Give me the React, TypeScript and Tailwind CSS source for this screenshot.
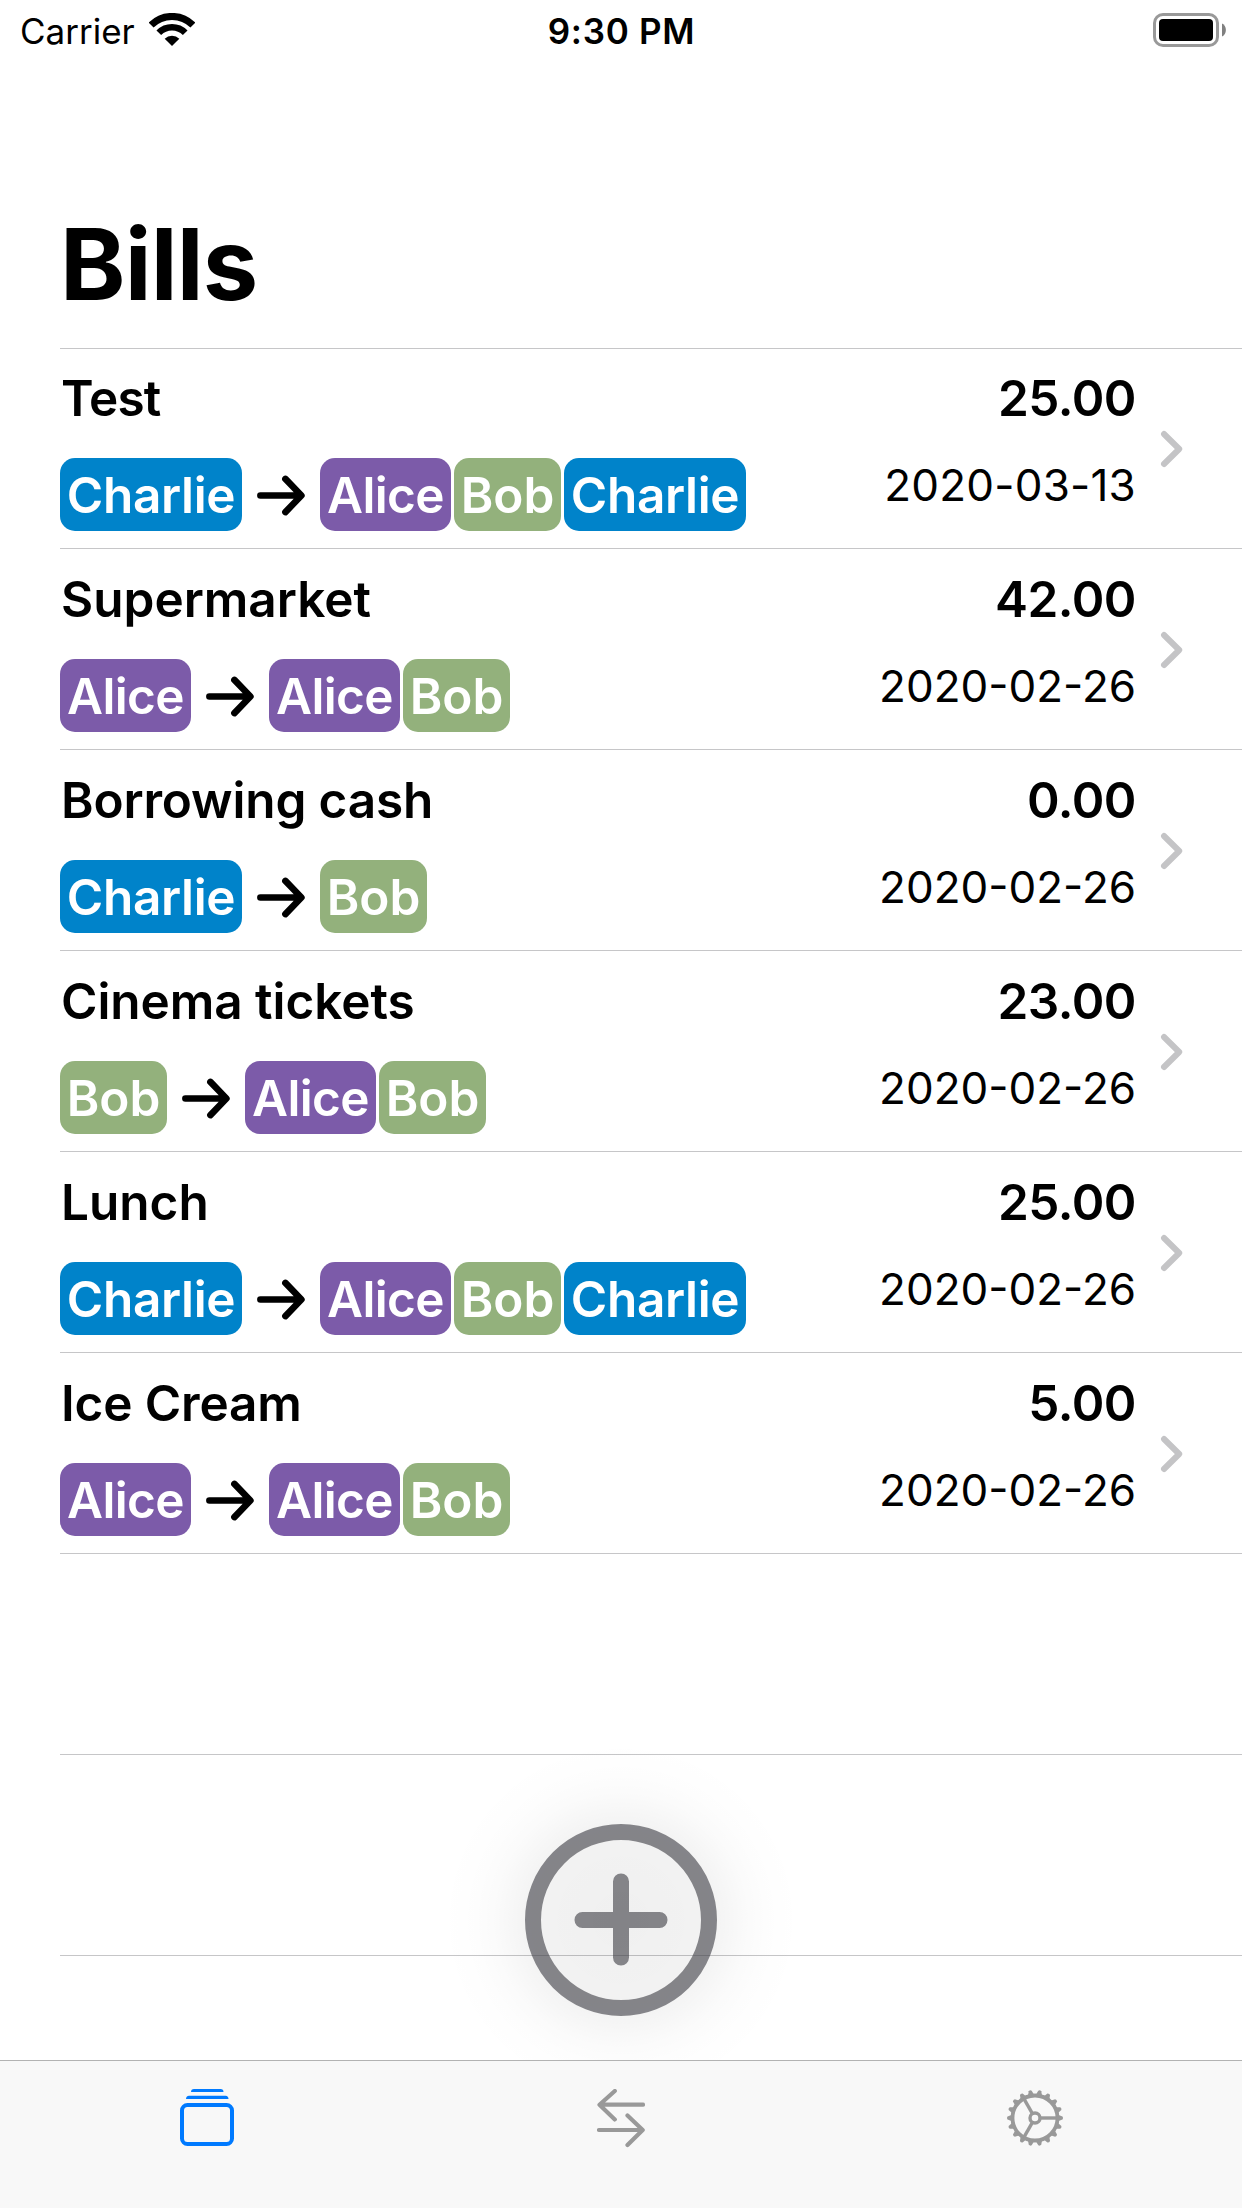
import React from "react";

type Person = "Alice" | "Bob" | "Charlie";

interface Bill {
  title: string;
  titleClass?: string;
  amount: string;
  date: string;
  dateClass?: string;
  from: Person;
  to: Person[];
}

const bills: Bill[] = [
  { title: "Test", titleClass: "tracking-[-0.8px]", amount: "25.00", date: "2020-03-13", dateClass: "tracking-[0.2px]", from: "Charlie", to: ["Alice", "Bob", "Charlie"] },
  { title: "Supermarket", amount: "42.00", date: "2020-02-26", from: "Alice", to: ["Alice", "Bob"] },
  { title: "Borrowing cash", titleClass: "tracking-[-0.15px]", amount: "0.00", date: "2020-02-26", from: "Charlie", to: ["Bob"] },
  { title: "Cinema tickets", titleClass: "tracking-[-0.05px]", amount: "23.00", date: "2020-02-26", from: "Bob", to: ["Alice", "Bob"] },
  { title: "Lunch", amount: "25.00", date: "2020-02-26", from: "Charlie", to: ["Alice", "Bob", "Charlie"] },
  { title: "Ice Cream", titleClass: "tracking-[-0.15px]", amount: "5.00", date: "2020-02-26", from: "Alice", to: ["Alice", "Bob"] },
];

const chipClass: Record<Person, string> = {
  Alice: "w-[131px] bg-[#7c5ba9] tracking-[-0.6px]",
  Bob: "w-[107px] bg-[#93b17c]",
  Charlie: "w-[182px] bg-[#0083ca] tracking-[-0.35px]",
};

function Chip({ name }: { name: Person }) {
  return (
    <span className={`flex h-[73px] justify-center rounded-[15px] leading-[75px] text-white ${chipClass[name]}`}>
      {name}
    </span>
  );
}

function Arrow() {
  return (
    <svg className="mx-[15px] mt-px h-[41px] w-12" viewBox="0 0 48 41" fill="none" stroke="#000" strokeWidth="6.6" strokeLinecap="round" strokeLinejoin="round">
      <path d="M3.4 20.5H43M28.4 3.9 44.4 20.5 28.4 37.1" />
    </svg>
  );
}

function BillRow({ bill }: { bill: Bill }) {
  return (
    <li className="ml-[60px] flex h-[201px] items-end border-b border-[#c6c6c8] pr-[59px] first:h-[200px]">
      <div className="flex grow flex-col gap-[30px] pb-[17px] text-[49.5px] font-semibold">
        <div className={`pl-px leading-[60px] ${bill.titleClass ?? ""}`}>{bill.title}</div>
        <div className="flex items-center">
          <Chip name={bill.from} />
          <Arrow />
          <div className="flex gap-[3px]">
            {bill.to.map((name) => (
              <Chip key={name} name={name} />
            ))}
          </div>
        </div>
      </div>
      <div className="flex flex-col items-end gap-[27px] pb-[33px] leading-[60px]">
        <div className="text-[49.5px] font-semibold tracking-[-0.5px]">{bill.amount}</div>
        <div className={`text-[44px] ${bill.dateClass ?? "tracking-normal"}`}>{bill.date}</div>
      </div>
      <svg className="mb-[80px] ml-[24px] h-[38px] w-[23px]" viewBox="0 0 23 38" fill="none" stroke="#c4c4c6" strokeWidth="6" strokeLinecap="round" strokeLinejoin="round">
        <path d="M4 4 19.2 19 4 34" />
      </svg>
    </li>
  );
}

function StatusBar() {
  return (
    <header className="grid h-[62px] grid-cols-3 text-[35px] leading-[62px]">
      <div className="flex pl-5">
        <span className="w-[129px]">Carrier</span>
        <svg className="mt-[13px] h-[33px] w-[46px]" viewBox="0 0 46 33" fill="none" stroke="#000">
          <path d="M2.1 12.1a29.5 29.5 0 0 1 41.8 0" strokeWidth="7" />
          <path d="M9.8 19.8a18.6 18.6 0 0 1 26.4 0" strokeWidth="6.6" />
          <path d="M23 33 15.7 25.7a10.3 10.3 0 0 1 14.6 0Z" fill="#000" stroke="none" />
        </svg>
      </div>
      <div className="pl-px text-center font-semibold tracking-[0.7px]">9:30 PM</div>
      <div className="flex justify-end pt-[13px] pr-[15px]">
        <svg className="h-[34px] w-[74px]" viewBox="0 0 74 34">
          <rect x="1.5" y="1.5" width="63" height="31" rx="8.5" fill="none" stroke="#999" strokeWidth="3" />
          <rect x="6" y="6" width="54" height="22" rx="4" />
          <path d="M69 10.5c5.200 2.200 5.200 10.800 0 13z" fill="#808080" />
        </svg>
      </div>
    </header>
  );
}

function AddButton() {
  return (
    <button aria-label="Add bill" className="absolute bottom-0 left-1/2 h-[320px] w-[360px] -translate-x-1/2">
      <svg className="h-[320px] w-[360px]" viewBox="0 0 360 320" fill="none">
        <defs>
          <radialGradient id="glow" gradientUnits="userSpaceOnUse" cx="180" cy="180" r="180">
            <stop offset="0" stopOpacity="0.06" />
            <stop offset="0.5" stopOpacity="0.05" />
            <stop offset="0.6" stopOpacity="0.034" />
            <stop offset="0.7" stopOpacity="0.018" />
            <stop offset="0.82" stopOpacity="0.007" />
            <stop offset="1" stopOpacity="0" />
          </radialGradient>
        </defs>
        <rect width="360" height="320" fill="url(#glow)" />
        <g stroke="#3c3c43" strokeWidth="16" strokeLinecap="round" opacity="0.6">
          <circle cx="180" cy="180" r="88" />
          <path d="M141.500 180h77M180 141.500v76" />
        </g>
      </svg>
    </button>
  );
}

const teeth = Array.from({ length: 18 }, (_, i) => i * 20);

function TabBar() {
  return (
    <nav className="grid h-[148px] grid-cols-3 justify-items-center border-t border-[#b2b2b2] bg-[#f8f8f8] pt-7">
      <svg className="h-[58px] w-[54px]" viewBox="0 0 54 58" fill="none">
        <rect x="2" y="16" width="50" height="39" rx="5.500" stroke="#007aff" strokeWidth="4" />
        <path d="M11 3c0-2 1-3 3-3h26.500c2 0 3 1 3 3z M6 10c0-2 1-3.300 3-3.300h36.500c2 0 3 1.300 3 3.300z" fill="#007aff" />
      </svg>
      <svg className="h-[60px] w-12" viewBox="0 0 48 60" fill="none" stroke="#999" strokeWidth="4.2" strokeLinecap="round" strokeLinejoin="round">
        <path d="M46 15.700H3M17.800 2 2.500 15.700l15.300 14.700M2 41h43M30.500 26.500 45.700 41 30.500 56" />
      </svg>
      <svg className="h-[58px] w-[58px]" viewBox="-29 -29 58 58" fill="none" stroke="#999">
        <circle r="22.500" strokeWidth="3.800" />
        <circle r="5" strokeWidth="3.400" />
        {[0, 120, 240].map((a) => (
          <path key={a} d="M6 0H22" strokeWidth="3.400" transform={`rotate(${a})`} />
        ))}
        {teeth.map((a) => (
          <path key={a} d="M23-3.200 27.500-1.500Q28.600 0 27.500 1.500L23 3.200Z" fill="#999" stroke="none" transform={`rotate(${a})`} />
        ))}
      </svg>
    </nav>
  );
}

export default function App() {
  return (
    <div className="flex h-[2208px] w-[1242px] flex-col overflow-hidden bg-white font-['Inter',sans-serif] text-black">
      <StatusBar />
      <main className="relative grow overflow-hidden">
        <h1 className="mt-[152px] pl-[60px] text-[99px] leading-[100px] font-bold tracking-[-0.8px]">Bills</h1>
        <div className="mt-[34px] ml-[60px] h-px bg-[#c6c6c8]" />
        <ul>
          {bills.map((bill) => (
            <BillRow key={bill.title} bill={bill} />
          ))}
          <li className="ml-[60px] h-[201px] border-b border-[#c6c6c8]" />
          <li className="ml-[60px] h-[201px] border-b border-[#c6c6c8]" />
        </ul>
        <AddButton />
      </main>
      <TabBar />
    </div>
  );
}
